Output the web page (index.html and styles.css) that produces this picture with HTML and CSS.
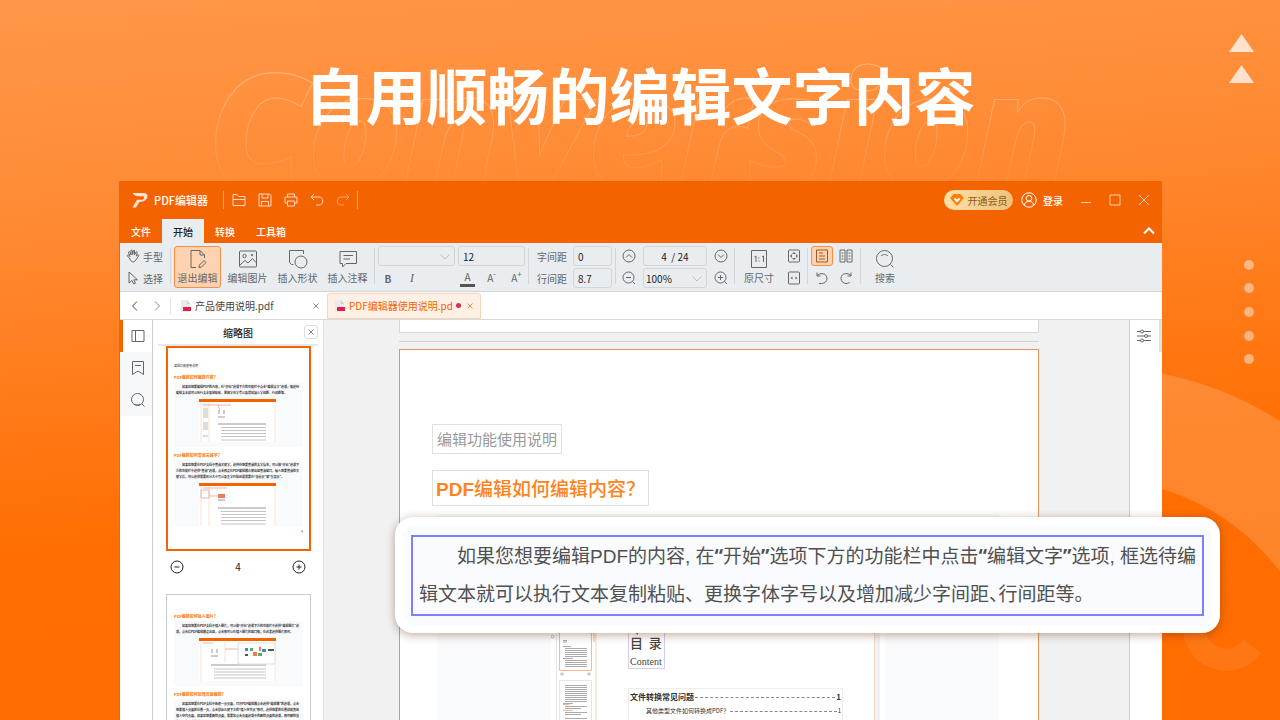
FILE: index.html
```html
<!DOCTYPE html>
<html lang="zh-CN">
<head>
  <meta charset="UTF-8">
  <title>PDF编辑器</title>
  <link rel="stylesheet" href="styles.css">
</head>
<body>
  <!-- background shapes -->
  <svg class="deco" viewBox="0 0 1280 720" preserveAspectRatio="xMaxYMax slice" aria-hidden="true">
    <circle class="deco-ring" cx="1095" cy="710" r="287"/>
    <path class="deco-hook" d="M1194 628 A32 32 0 0 0 1252 646.500"/>
    <path class="deco-tri" d="M1241.500 34 L1254 52 H1229 Z M1241.500 65 L1254 83 H1229 Z"/>
    <g class="deco-dots">
      <circle cx="1249" cy="265" r="5"/>
      <circle cx="1249" cy="288" r="5"/>
      <circle cx="1249" cy="312" r="5"/>
      <circle cx="1249" cy="336" r="5"/>
      <circle cx="1249" cy="359" r="5"/>
    </g>
  </svg>

  <header class="banner">
    <div class="banner-ghost">Conversion</div>
    <h1>自用顺畅的编辑文字内容</h1>
  </header>

  <main class="window">
    <!-- title bar -->
    <div class="titlebar">
      <svg class="logo" width="16" height="16" viewBox="0 0 16 16"><path d="M.5 1 H12 C15.500 1 16.500 4.500 14.500 7 C13 9 10.500 9.800 7.500 10 L4 15.500 H.5 L5 7.800 H10 C12 7.500 13 4.200 11 4.200 H5.500 C3.500 4.200 1.500 3 .5 1 Z"/></svg>
      <strong class="app-name">PDF编辑器</strong>
      <div class="quick">
        <button aria-label="打开"><svg width="16" height="16" viewBox="0 0 16 16"><path d="M2 13.500 V2.500 H6 L7.500 4.500 H14 V13.500 Z M2 7.500 H14"/></svg></button>
        <button aria-label="保存"><svg width="16" height="16" viewBox="0 0 16 16"><path d="M2 2 H12.500 L14 3.500 V14 H2 Z M5 2 V6 H11 V2 M4.500 14 V9.500 H11.500 V14"/></svg></button>
        <button aria-label="打印"><svg width="16" height="16" viewBox="0 0 16 16"><path d="M4.500 5 V2 H11.500 V5 M4.500 11 H2 V5 H14 V11 H11.500 M4.500 9 H11.500 V14 H4.500 Z"/></svg></button>
        <button aria-label="撤销"><svg width="16" height="16" viewBox="0 0 16 16"><path d="M5 2 L2 5 L5 8 M2 5 H10 C15 5 15 13 10 13 H7"/></svg></button>
        <button class="faded" aria-label="重做"><svg width="16" height="16" viewBox="0 0 16 16"><path d="M11 2 L14 5 L11 8 M14 5 H6 C1 5 1 13 6 13 H9"/></svg></button>
      </div>
      <div class="account">
        <button class="vip"><svg width="14" height="14" viewBox="0 0 14 14"><path class="gem" d="M3.500 1 H10.500 L14 5 L7 13 L0 5 Z"/><path class="gem-v" d="M4.500 5.500 L7 8 L9.500 5.500"/></svg>开通会员</button>
        <button class="login"><svg width="16" height="16" viewBox="0 0 16 16"><circle cx="8" cy="8" r="7.200"/><circle cx="8" cy="6.300" r="2.800"/><path d="M3.500 13 C4 10.500 5.500 9.200 8 9.200 C10.500 9.200 12 10.500 12.500 13"/></svg>登录</button>
        <button class="win" aria-label="最小化"><svg width="12" height="12" viewBox="0 0 12 12"><path d="M1 8.500 H11"/></svg></button>
        <button class="win" aria-label="最大化"><svg width="12" height="12" viewBox="0 0 12 12"><path d="M1 1 H11 V11 H1 Z"/></svg></button>
        <button class="win" aria-label="关闭"><svg width="12" height="12" viewBox="0 0 12 12"><path d="M1 1 L11 11 M11 1 L1 11"/></svg></button>
      </div>
    </div>

    <!-- menu -->
    <nav class="menu">
      <button>文件</button>
      <button class="current">开始</button>
      <button>转换</button>
      <button class="wide">工具箱</button>
      <button class="collapse" aria-label="收起"><svg width="12" height="8" viewBox="0 0 12 8"><path d="M1 6.500 L6 1.500 L11 6.500"/></svg></button>
    </nav>

    <!-- ribbon -->
    <div class="ribbon">
      <div class="group tools">
        <button><svg width="14" height="14" viewBox="0 0 14 14"><path d="M4 10 L1.500 7 C1 6 2.200 5.500 3 6.500 L4 7.500 L2.500 3.500 C2.300 2.500 3.500 2.200 4 3.200 L5.200 6 L4.800 1.800 C4.800 .700 6 .700 6.200 1.700 L6.800 5.500 L7.300 1.700 C7.500 .700 8.700 .900 8.600 2 L8.400 6 L10 3 C10.500 2.200 11.500 2.600 11.200 3.600 L10.300 7 L11.800 6 C12.800 5.500 13.300 6.500 12.500 7.200 L9.800 11 C8.500 14 5 13.500 4 10 Z"/></svg>手型</button>
        <button><svg width="14" height="14" viewBox="0 0 14 14"><path d="M3 1 V12 L5.800 9.500 L7.800 13 L9.500 12.200 L7.800 8.800 H11.500 Z"/></svg>选择</button>
      </div>
      <i class="sep"></i>
      <div class="bigs">
        <button class="big active"><svg width="20" height="20" viewBox="0 0 20 20"><path d="M8 18.500 H3 V1.500 H12 L16.500 6 V9 M12 1.500 V6 H16.500 M11 18.500 L11.500 16 L16 11.500 L18 13.500 L13.500 18 Z"/></svg>退出编辑</button>
        <button class="big"><svg width="20" height="20" viewBox="0 0 20 20"><rect x="1.500" y="2" width="17" height="16" rx="1"/><circle cx="6.500" cy="7" r="1.700"/><path d="M2 16 L7 11.500 L10 14 L14.500 9.500 L18.500 14"/><circle cx="14" cy="6" r=".8"/></svg>编辑图片</button>
        <button class="big"><svg width="20" height="20" viewBox="0 0 20 20"><path d="M5.500 15.500 H3.500 L1.500 13.500 V1.500 H15.500 V5"/><circle cx="13" cy="13" r="6"/></svg>插入形状</button>
        <button class="big"><svg width="20" height="20" viewBox="0 0 20 20"><path d="M2 2.500 H18.500 V14.500 H8 L4.500 18 V14.500 H2 Z M5.500 6.500 H15 M5.500 10 H12"/></svg>插入注释</button>
      </div>
      <i class="sep"></i>
      <div class="group font">
        <label class="pick"><select aria-label="字体"><option></option></select><svg width="10" height="6" viewBox="0 0 10 6"><path d="M.5 .500 L5 5 L9.500 .500"/></svg></label>
        <input type="text" value="12" aria-label="字号">
        <div class="styles">
          <button class="bold">B</button>
          <button class="italic">I</button>
        </div>
        <div class="sizes">
          <button class="color">A</button>
          <button>A<sup>-</sup></button>
          <button>A<sup>+</sup></button>
        </div>
      </div>
      <i class="sep"></i>
      <div class="group spacing">
        <label for="charGap">字间距</label><input id="charGap" type="text" value="0">
        <label for="lineGap">行间距</label><input id="lineGap" type="text" value="8.7">
      </div>
      <i class="sep"></i>
      <div class="group paging">
        <button aria-label="上一页"><svg width="14" height="14" viewBox="0 0 14 14"><circle cx="7" cy="7" r="6"/><path d="M4 8.500 L7 5.500 L10 8.500"/></svg></button>
        <input type="text" class="center" value="4  / 24" aria-label="页码">
        <button aria-label="下一页"><svg width="14" height="14" viewBox="0 0 14 14"><circle cx="7" cy="7" r="6"/><path d="M4 5.500 L7 8.500 L10 5.500"/></svg></button>
        <button aria-label="缩小"><svg width="14" height="14" viewBox="0 0 14 14"><circle cx="6.500" cy="6.500" r="5.500"/><path d="M4 6.500 H9 M10.500 10.500 L13 13"/></svg></button>
        <label class="pick"><select aria-label="缩放"><option>100%</option></select><svg width="10" height="6" viewBox="0 0 10 6"><path d="M.5 .500 L5 5 L9.500 .500"/></svg></label>
        <button aria-label="放大"><svg width="14" height="14" viewBox="0 0 14 14"><circle cx="6.500" cy="6.500" r="5.500"/><path d="M4 6.500 H9 M6.500 4 V9 M10.500 10.500 L13 13"/></svg></button>
      </div>
      <i class="sep"></i>
      <button class="big small"><svg width="20" height="20" viewBox="0 0 20 20"><path d="M2.500 1.500 H17.500 V18.500 H2.500 Z M5.500 8 L7 7 V13 M13 8 L14.500 7 V13"/><path d="M10 8.500 V9.500 M10 11.500 V12.500"/></svg>原尺寸</button>
      <div class="group fit">
        <button aria-label="适合页面"><svg width="14" height="14" viewBox="0 0 14 14"><rect x="1.500" y="1" width="11" height="12" rx="1"/><path class="solid" d="M7 3 L9 5 H5 Z M7 11 L9 9 H5 Z M3 7 L5 5 V9 Z M11 7 L9 5 V9 Z"/></svg></button>
        <button aria-label="适合宽度"><svg width="14" height="14" viewBox="0 0 14 14"><rect x="1.500" y="1" width="11" height="12" rx="1"/><path class="solid" d="M3.500 7 L5.500 5.500 V8.500 Z M10.500 7 L8.500 5.500 V8.500 Z"/></svg></button>
      </div>
      <i class="sep"></i>
      <div class="group view">
        <button class="active" aria-label="单页"><svg width="14" height="14" viewBox="0 0 14 14"><path d="M1.500 1 H12.500 V13 H1.500 Z M4 4 H8 M4 7 H10 M4 10 H10"/></svg></button>
        <button aria-label="双页"><svg width="14" height="14" viewBox="0 0 14 14"><path d="M1 1 H6 V13 H1 Z M8 1 H13 V13 H8 Z M2.500 4 H4.500 M2.500 7 H4.500 M2.500 10 H4.500 M9.500 4 H11.500 M9.500 7 H11.500 M9.500 10 H11.500"/></svg></button>
        <button aria-label="向左旋转"><svg width="14" height="14" viewBox="0 0 14 14"><path d="M2 1.500 V5 H5.500 M2 5 C4 1.500 12 1.500 12 7.500 C12 10.500 9.500 12.500 6.500 12.500 H4"/></svg></button>
        <button aria-label="向右旋转"><svg width="14" height="14" viewBox="0 0 14 14"><path d="M12 1.500 V5 H8.500 M12 5 C10 1.500 2 1.500 2 7.500 C2 10.500 4.500 12.500 7 12.500 C9 12.500 10 12 11 11"/></svg></button>
      </div>
      <i class="sep"></i>
      <button class="big small"><svg width="20" height="20" viewBox="0 0 20 20"><circle cx="9.500" cy="9.500" r="8"/><path d="M6 7 C8 5 11 5 13 7 M15.500 15.500 L18.500 18.500"/></svg>搜索</button>
    </div>

    <!-- open files -->
    <div class="filebar">
      <div class="history">
        <button aria-label="后退"><svg width="8" height="10" viewBox="0 0 8 10"><path d="M6 .500 L1.500 5 L6 9.500"/></svg></button>
        <button class="dim" aria-label="前进"><svg width="8" height="10" viewBox="0 0 8 10"><path d="M2 .500 L6.500 5 L2 9.500"/></svg></button>
      </div>
      <div class="file">
        <svg class="pdf" width="12" height="12" viewBox="0 0 12 12"><path class="sheet" d="M1 0 H8 L10 3 V12 H1 Z"/><path class="tag" d="M3 7 H11 V11 H3 Z"/><path class="fold" d="M7 1 L10 4 H7 Z"/></svg>
        <span>产品使用说明.pdf</span>
        <button class="close" aria-label="关闭"><svg width="6" height="6" viewBox="0 0 6 6"><path d="M.5 .500 L5.500 5.500 M5.500 .500 L.5 5.500"/></svg></button>
      </div>
      <div class="file open">
        <svg class="pdf" width="12" height="12" viewBox="0 0 12 12"><path class="sheet" d="M1 0 H8 L10 3 V12 H1 Z"/><path class="tag" d="M3 7 H11 V11 H3 Z"/><path class="fold" d="M7 1 L10 4 H7 Z"/></svg>
        <span>PDF编辑器使用说明.pd</span>
        <i class="unsaved"></i>
        <button class="close" aria-label="关闭"><svg width="6" height="6" viewBox="0 0 6 6"><path d="M.5 .500 L5.500 5.500 M5.500 .500 L.5 5.500"/></svg></button>
      </div>
    </div>

    <div class="work">
      <nav class="rail">
        <button class="current" aria-label="缩略图"><svg width="14" height="14" viewBox="0 0 14 14"><path d="M1 1.500 H13 V12.500 H1 Z M4.500 1.500 V12.500"/></svg></button>
        <button aria-label="书签"><svg width="14" height="14" viewBox="0 0 14 14"><path d="M1.500 .500 H12.500 V13.500 L7 10 L1.500 13.500 Z M4 4.500 H10"/></svg></button>
        <button aria-label="搜索"><svg width="14" height="14" viewBox="0 0 14 14"><circle cx="6.500" cy="6.500" r="6"/><path d="M4 11 C6 12.500 8 12 9 11 M11 11 L13.500 13.500"/></svg></button>
      </nav>

      <aside class="thumbs">
        <div class="thumbs-head"><span>缩略图</span><button aria-label="关闭"><svg width="6" height="6" viewBox="0 0 6 6"><path d="M.5 .500 L5.500 5.500 M5.500 .500 L.5 5.500"/></svg></button></div>
        <div class="thumb selected">
          <p class="mini-top">编辑功能使用说明</p>
          <h3>PDF编辑如何编辑内容？</h3>
          <div class="mini">
            <p>如果您想要编辑PDF的内容，在“开始”选项下方的功能栏中点击“编辑文字”选项，框选待编辑文本就可以执行文本复制粘贴、更换字体字号以及增加减少字间距、行间距等。</p>
            <svg width="77" height="43" viewBox="0 0 77 43"><path class="m-bg" d="M0 0 H77 V43 H0 Z"/><path class="m-bar" d="M0 0 H77 V3 H0 Z"/><path class="m-edge" d="M2 3 V43 M10 3 V43 M76 3 V43 M0 5 H14"/><path class="m-red" d="M4 6 H32 M19 6 L21 11"/><path class="m-thumb" d="M4 9 H9 V19 H4 Z M4 23 H9 V31 H4 Z M4 36 H9 V38 H4 Z"/><path class="m-ink" d="M19 12 H21 M24 12 H26 M19 14 H21 M24 14 H26 M19 18 H26 M19 25 H67"/><path class="m-line" d="M22 28.500 H67 M22 31.500 H67 M22 34.500 H67 M22 37.500 H67 M22 41 H67"/></svg>
          </div>
          <h3>PDF编辑如何查询关键字？</h3>
          <div class="mini">
            <p>如果您想要在PDF文档中查询关键字，选择你想要查询的文字信息，可以按“开始”选项下方的功能栏中选择“查询”选项，点击即会在PDF编辑器右侧出现查询窗口，输入想要查询的关键字后，可以选择需要区分大小写以及全字匹配还是需要在“当前页”或“全部页”。</p>
            <svg width="77" height="43" viewBox="0 0 77 43"><path class="m-bg" d="M0 0 H77 V43 H0 Z"/><path class="m-bar" d="M0 0 H77 V3 H0 Z"/><path class="m-edge" d="M2 3 V43 M10 3 V43 M76 3 V43"/><path class="m-red" d="M2 7 H10 V15 H2 Z M10 13 H19 M4 5 H28"/><path class="m-pic" d="M19 11 H26 V15 H19 Z"/><path class="m-ink" d="M19 17 H26 M19 25 H67"/><path class="m-line" d="M22 28.500 H67 M22 31.500 H67 M22 34.500 H67 M22 37.500 H67 M22 41 H67"/></svg>
          </div>
          <p class="mini-page">4</p>
        </div>
        <div class="thumb-zoom">
          <button aria-label="缩小"><svg width="14" height="14" viewBox="0 0 14 14"><circle cx="7" cy="7" r="6"/><path d="M4.500 7 H9.500"/></svg></button>
          <span>4</span>
          <button aria-label="放大"><svg width="14" height="14" viewBox="0 0 14 14"><circle cx="7" cy="7" r="6"/><path d="M4.500 7 H9.500 M7 4.500 V9.500"/></svg></button>
        </div>
        <div class="thumb">
          <h3>PDF编辑如何插入图片？</h3>
          <div class="mini">
            <p>如果您想要在PDF文档中插入图片，可以按“开始”选项下方的功能栏中选择“编辑图片”选项，点击后PDF编辑器会出现，点击即可以在插入图片的窗口框，在这里选择图片即可。</p>
            <svg width="77" height="43" viewBox="0 0 77 43"><path class="m-bg" d="M0 0 H77 V43 H0 Z"/><path class="m-bar" d="M0 0 H77 V3 H0 Z"/><path class="m-edge" d="M2 3 V43 M76 3 V43 M26 4 V25"/><path class="m-red" d="M4 5 H14 M26 11 H44"/><path class="m-ink" d="M12 12 H14 M17 12 H19 M12 14 H14 M17 14 H19 M12 18 H19 M12 27 H67"/><path class="m-line" d="M15 31 H67 M15 34 H67 M15 37 H67 M15 40 H67"/><path class="m-panel" d="M39 5 H76 V26 H39 Z"/><path class="m-blue" d="M46 10 H49 V13 H46 Z M63 11 H67 V14 H63 Z"/><path class="m-green" d="M51 10 H54 V13 H51 Z M59 15 H63 V18 H59 Z"/><path class="m-pic" d="M60 9 H62 V13 H60 Z M54 14 H58 V18 H54 Z"/><path class="m-dark" d="M46 16 H49 V18 H46 Z M69 11 H75 V13 H69 Z"/></svg>
          </div>
          <h3>PDF编辑如何处理页面编辑？</h3>
          <div class="mini">
            <p>如果您想要在PDF文档中新建一页页面，打开PDF编辑器点击选择“编辑器”的选项，点击想要插入页面的位置一页，点击鼠标右键下方的“插入空白页”即可，选择想要的位置就能直接插入空白页面，如果您想要删除页面，需要您点击页面选项中的删除页面的选项，即可删除当前页面的内容信息。</p>
          </div>
        </div>
      </aside>

      <section class="canvas">
        <div class="page previous"></div>
        <div class="page-rule"></div>
        <article class="page">
          <p class="doc-name">编辑功能使用说明</p>
          <h2><b>PDF</b>编辑如何编辑内容<span class="mark">？</span></h2>
          <div class="para">
            <div class="shot">
              <svg class="shot-thumbs" width="66" height="92" viewBox="0 0 66 92">
                <path class="s-edge" d="M5.500 0 V92"/>
                <circle class="s-dot" cx="1.500" cy="7.500" r="1.500"/>
                <path class="s-orange" d="M8.500 0 V41.500 H40.500 V0"/>
                <path class="s-tan" d="M42 0 H44 V13 H42 Z M44.500 0 H45.500 V92 H44.500 Z"/>
                <path class="s-ink" d="M12 11.500 H16 M12 13 H16 M12 17.500 H20 M14 19.500 H36 M14 21.500 H36 M14 23.500 H36 M14 25.500 H36 M14 27.500 H36 M12 29.500 H22 M14 31.500 H36 M14 33.500 H36 M14 35.500 H36 M14 37.500 H36"/>
                <path class="s-ink" d="M14 56.500 H36 M14 58.500 H36 M14 60.500 H36 M14 62.500 H36 M14 64.500 H36 M14 66.500 H36 M14 68.500 H36 M14 70.500 H36 M14 72.500 H36 M12 74.500 H22"/>
                <path class="s-ink" d="M14 77.500 H36 M14 79.500 H30 M14 83.500 H36 M14 85.500 H30 M14 89.500 H36"/>
                <path class="s-edge" d="M8.500 92 V51.500 H40.500 V92"/>
                <circle class="s-dot" cx="11" cy="45" r="1.200"/><circle class="s-dot" cx="38" cy="45" r="1.200"/>
                <path class="s-orange" d="M12 75.500 H18 M12 81.500 H22"/>
              </svg>
              <div class="shot-doc">
                <div class="contents"><svg class="arrow" width="6" height="6" viewBox="0 0 6 6"><path d="M1 0 H4 V2 L5 1 V6 L1 3 Z"/></svg><strong>目  录</strong><span>Content</span></div>
                <ul class="toc">
                  <li class="chapter"><span>文件转换常见问题</span><i></i><span>1</span></li>
                  <li><span>其他类型文件如何转换成PDF？</span><i></i><span>1</span></li>
                  <li><span>CAD转PDF版本不高么？</span><i></i><span>1</span></li>
                </ul>
              </div>
            </div>
          </div>
        </article>
      </section>

      <aside class="props">
        <button aria-label="属性"><svg width="16" height="14" viewBox="0 0 16 14"><path d="M1 2.500 H4.500 M7.500 2.500 H15 M1 7 H8.500 M11.500 7 H15 M1 11.500 H4.500 M7.500 11.500 H15"/><circle cx="6" cy="2.500" r="1.500"/><circle cx="10" cy="7" r="1.500"/><circle cx="6" cy="11.500" r="1.500"/></svg></button>
      </aside>
    </div>
  </main>

  <!-- magnified paragraph -->
  <div class="lens">
    <div class="lens-inner">
      <p>如果您想要编辑PDF的内容, 在<q>开始</q>选项下方的功能栏中点击<q>编辑文字</q>选项, 框选待编<br>辑文本就可以执行文本复制粘贴、更换字体字号以及增加减少字间距<span class="half">、</span>行间距等。</p>
    </div>
  </div>
</body>
</html>
```
FILE: styles.css
```css
* {
  box-sizing: border-box;
}

body {
  margin: 0;
  height: 100vh;
  display: flex;
  flex-direction: column;
  position: relative;
  overflow: hidden;
  background: linear-gradient(175deg, #ff9849 0%, #ff8a34 27%, #ff6e02 67%, #ff6c00 100%);
  font-family: "Noto Sans CJK SC", sans-serif;
  font-size: 10px;
  color: #333;
}

button {
  border: none;
  background: none;
  padding: 0;
  margin: 0;
  font: inherit;
  color: inherit;
  display: flex;
  align-items: center;
  justify-content: center;
}

input,
select {
  font: inherit;
  color: #222;
  border: 1px solid #d3d6d9;
  border-radius: 3px;
  background: #eaedf0;
  padding: 0 4px;
  margin: 0;
  width: 100%;
  height: 20px;
  min-width: 0;
  appearance: none;
}

svg {
  flex: none;
  fill: none;
  stroke: currentColor;
}

h1, h2, h3, p, ul {
  margin: 0;
  padding: 0;
}

/* background shapes */
.deco {
  position: absolute;
  inset: 0;
  width: 100%;
  height: 100%;
  stroke: none;
}

.deco-ring {
  stroke: #fff;
  stroke-width: 112;
  opacity: 0.17;
}

.deco-hook {
  stroke: #fff;
  stroke-width: 22;
  opacity: 0.08;
}

.deco-tri {
  fill: rgba(255, 255, 255, 0.75);
}

.deco-dots {
  fill: rgba(255, 255, 255, 0.45);
}

/* banner */
.banner {
  position: relative;
  height: 181px;
  flex: none;
  padding-top: 52px;
  overflow: hidden;
  text-align: center;
}

.banner h1 {
  position: relative;
  font-size: 61px;
  line-height: 84px;
  font-weight: 700;
  color: #fff;
}

.banner-ghost {
  position: absolute;
  top: 20px;
  left: 0;
  right: 0;
  font-family: "Open Sans", sans-serif;
  font-size: 158px;
  line-height: 212px;
  font-weight: 800;
  font-style: italic;
  color: transparent;
  -webkit-text-stroke: 1px rgba(255, 255, 255, 0.4);
  -webkit-mask-image: linear-gradient(#000 15%, transparent 85%);
  mask-image: linear-gradient(#000 15%, transparent 85%);
}

/* window */
.window {
  position: relative;
  flex: 1;
  min-height: 0;
  margin: 0 118px 0 119px;
  display: flex;
  flex-direction: column;
  border-left: 1px solid #f46400;
  background: #fff;
}

.titlebar {
  flex: none;
  height: 38px;
  display: flex;
  align-items: center;
  padding: 0 12px;
  background: #f36400;
  color: #fff;
}

.logo {
  fill: #fde3d0;
  stroke: none;
}

.app-name {
  margin-left: 6px;
  width: 69px;
  font-size: 11px;
  font-weight: 500;
  white-space: nowrap;
}

.quick {
  display: flex;
  gap: 10px;
  align-items: center;
  height: 18px;
  padding: 0 6px 0 7px;
  border-left: 1px solid #f9a56c;
  border-right: 1px solid #f9a56c;
  color: #ffd9bf;
}

.faded {
  color: #f9a56c;
}

.account {
  margin-left: auto;
  display: flex;
  align-items: center;
}

.vip {
  width: 69px;
  height: 20px;
  gap: 4px;
  border-radius: 10px;
  background: linear-gradient(90deg, #fde0a8, #efc079);
  color: #8b5a16;
}

.gem {
  fill: #fb8205;
  stroke: none;
}

.gem-v {
  stroke: #fff;
  stroke-width: 2;
}

.login {
  margin: 0 8px;
  gap: 6px;
  font-weight: 500;
}

.win {
  width: 29px;
  color: #ffd0b0;
}

.win:last-child {
  width: 12px;
  margin-left: 9px;
}

.menu {
  flex: none;
  height: 24px;
  display: flex;
  background: #f36400;
}

.menu button {
  width: 42px;
  color: #fff;
  font-weight: 500;
}

.menu .current {
  background: #e9edf0;
  color: #222;
}

.menu .wide {
  width: 50px;
}

.menu .collapse {
  width: 12px;
  margin: 0 7px 0 auto;
  stroke-width: 2;
}

/* ribbon */
.ribbon {
  flex: none;
  height: 49px;
  display: flex;
  align-items: flex-start;
  padding-top: 3px;
  background: #e9edf0;
  border-bottom: 1px solid #d0d5da;
  color: #666;
}

.sep {
  flex: none;
  width: 1px;
  height: 36px;
  margin: 2px 3px 0;
  background: #d3d7dd;
}

.group {
  display: grid;
  grid-auto-rows: 20px;
  gap: 2px 0;
  align-items: center;
}

.tools {
  padding: 0 4px 0 6px;
}

.tools button {
  gap: 3px;
}

.bigs {
  display: flex;
  gap: 3px;
}

.big {
  width: 47px;
  height: 42px;
  flex-direction: column;
  gap: 2px;
  line-height: 14px;
  white-space: nowrap;
}

.big.small {
  width: 42px;
}

.ribbon .active {
  background: #ffd2b1;
  border: 1px solid #f88d45;
  border-radius: 3px;
}

.font {
  grid-template-columns: 77px 67px;
  column-gap: 3px;
}

.pick {
  position: relative;
  display: block;
}

.pick svg {
  position: absolute;
  right: 5px;
  top: 8px;
  color: #bcc1c6;
}

.styles {
  display: flex;
}

.styles button {
  width: 20px;
  margin-right: 4px;
}

.styles .bold {
  font-weight: 700;
}

.italic {
  font-family: "Liberation Serif", serif;
  font-style: italic;
  font-size: 12px;
}

.sizes {
  display: flex;
  gap: 8px;
}

.sizes button {
  width: 18px;
  line-height: 14px;
}

.sizes sup {
  font-size: 8px;
  line-height: 8px;
  align-self: flex-start;
}

.sizes .color {
  width: 16px;
  margin-left: 2px;
  border-bottom: 3px solid #555;
}

.spacing {
  grid-template-columns: 36px 39px;
  padding-left: 5px;
}

.paging {
  grid-template-columns: 14px 64px 14px;
  column-gap: 7px;
  padding: 0 3px;
}

.paging select {
  padding: 0 2px;
}

.center {
  text-align: center;
  white-space: pre;
}

.fit {
  grid-template-columns: 14px;
  padding: 0 3px 0 7px;
}

.solid {
  fill: currentColor;
  stroke: none;
}

.view {
  grid-template-columns: 22px 22px;
  column-gap: 2px;
}

.view button {
  height: 20px;
}

.view .active {
  color: #a0592a;
}

/* file tabs */
.filebar {
  flex: none;
  height: 28px;
  display: flex;
  align-items: center;
  border-bottom: 1px solid #d9d9d9;
  color: #444;
}

.history {
  display: flex;
  gap: 14px;
  width: 51px;
  height: 16px;
  padding-left: 11px;
  border-right: 1px solid #e4e4e4;
}

.history .dim {
  color: #888;
}

.file {
  display: flex;
  align-items: center;
  width: 156px;
  height: 26px;
  padding: 0 8px 0 9px;
}

.file span {
  margin-left: 3px;
  white-space: nowrap;
}

.file .close {
  margin-left: auto;
  color: #888;
}

.file.open {
  width: 154px;
  padding: 0 7px 0 6px;
  background: #fff0e5;
  border: 1px solid #f8d3b8;
  border-radius: 3px 3px 0 0;
  color: #f36400;
}

.file.open .close {
  color: #f08a4a;
}

.sheet {
  fill: #e9e9ee;
  stroke: none;
}

.fold {
  fill: #ccc;
  stroke: none;
}

.tag {
  fill: #e0204a;
  stroke: none;
}

.unsaved {
  width: 5px;
  height: 5px;
  margin-left: 3px;
  border-radius: 50%;
  background: #d9304a;
}

/* work area */
.work {
  flex: 1;
  min-height: 0;
  display: flex;
  overflow: hidden;
}

.rail {
  flex: none;
  width: 33px;
  border-right: 1px solid #ccc;
}

.rail button {
  width: 32px;
  height: 32px;
  padding-left: 3px;
  background: #f6f8fa;
  color: #666;
}

.rail .current {
  background: #fff;
  padding: 0;
  border-left: 3px solid #f36400;
}

.thumbs {
  flex: none;
  width: 171px;
  padding: 0 5px;
  border-right: 1px solid #e2e2e2;
}

.thumbs-head {
  display: flex;
  align-items: center;
  justify-content: flex-end;
  height: 26px;
  border-bottom: 2px solid #e6e8ea;
  color: #222;
  font-weight: 500;
}

.thumbs-head span {
  margin-right: 51px;
}

.thumbs-head button {
  width: 14px;
  height: 14px;
  border: 1px solid #d8dee6;
  border-radius: 3px;
  color: #888;
}

.thumb {
  width: 145px;
  height: 205px;
  margin-left: 8px;
  padding: 13px 7px 0;
  border: 1px solid #ccc;
  overflow: hidden;
}

.thumb.selected {
  border: 2px solid #f36400;
  padding: 15px 6px 0;
}

.mini-top {
  font-size: 3px;
  line-height: 6px;
}

.thumb h3 {
  margin-top: 3px;
  font-size: 4px;
  line-height: 10px;
  font-weight: 700;
  color: #ff7a10;
}

.mini {
  min-height: 65px;
  margin-bottom: 1px;
  padding: 2px 4px 0 2px;
  background: #f9fafc;
}

.mini p {
  font-family: "Liberation Sans", "Noto Sans CJK SC", sans-serif;
  font-size: 3px;
  line-height: 6px;
  font-weight: 700;
  text-align: justify;
  text-indent: 6px;
}

.mini svg {
  display: block;
  margin: 3px auto 0;
}

.mini-page {
  margin-top: 4px;
  font-size: 3px;
  text-align: right;
}

.m-bg { fill: #fff; stroke: none; }
.m-bar { fill: #f36400; stroke: none; }
.m-edge { stroke: #fae3d3; }
.m-red { stroke: #eeb0a8; }
.m-thumb { fill: #ddd; stroke: none; }
.m-ink { stroke: #999; }
.m-line { stroke: #aaa; stroke-width: 0.7; }
.m-pic { fill: #ee7a5a; stroke: none; }
.m-panel { fill: #fff; stroke: #ddd; }
.m-blue { fill: #4a84c0; stroke: none; }
.m-green { fill: #55b060; stroke: none; }
.m-dark { fill: #555; stroke: none; }

.thumb-zoom {
  display: flex;
  align-items: center;
  justify-content: space-between;
  height: 43px;
  padding: 0 12px 12px;
  color: #222;
}

/* document */
.canvas {
  flex: 1;
  min-width: 0;
  padding: 0 90px 0 75px;
  background: #f1f1f1;
}

.page {
  height: 400px;
  padding: 74px 39px 0 32px;
  border: 1px solid #e8935a;
  background: #fff;
}

.page.previous {
  height: 13px;
  padding: 0;
  border: 1px solid #d8d8d8;
  border-top: none;
}

.page-rule {
  height: 16px;
  background: linear-gradient(#f1f1f1 8px, #d4d4d4 8px, #d4d4d4 9px, #f1f1f1 9px);
}

.doc-name {
  width: max-content;
  height: 30px;
  padding: 0 4px;
  border: 1px solid #e0e0e0;
  font-size: 15px;
  line-height: 28px;
  color: #999;
}

.page h2 {
  width: max-content;
  height: 36px;
  margin-top: 16px;
  padding: 0 3px;
  border: 1px solid #e0e0e0;
  font-size: 19px;
  line-height: 34px;
  font-weight: 500;
  color: #ff8320;
}

.page h2 b {
  font-family: "Liberation Sans", sans-serif;
}

.mark {
  font-family: "Noto Sans CJK TC", sans-serif;
}

.para {
  margin: 8px 0 0 5px;
  padding: 115px 119px 0 114px;
  background: #f9fafc;
}

.shot {
  display: flex;
  background: #fff;
  border-right: 5px solid #f1f1f1;
  outline: 0 solid #fff;
  box-shadow: 5px 0 0 #fff;
}

.s-edge { stroke: #e6e6e6; }
.s-orange { stroke: #f4bb90; }
.s-tan { fill: #f5d8c4; stroke: none; }
.s-ink { stroke: #aaa; }
.s-dot { stroke: #999; stroke-width: 0.7; }

.shot-doc {
  flex: 1;
  min-width: 0;
  padding: 0 31px 0 11px;
  border-right: 1px solid #f5d8c4;
}

.contents {
  position: relative;
  display: flex;
  flex-direction: column;
  width: 37px;
  height: 40px;
  padding-left: 1px;
  border: 1px solid #d5ccf2;
  border-top: none;
  color: #444;
}

.arrow {
  position: absolute;
  left: 4px;
  top: 0;
  fill: #e0303a;
  stroke: none;
}

.contents strong {
  font-size: 13px;
  line-height: 28px;
  font-weight: 500;
  white-space: pre;
}

.contents span {
  font-family: "Liberation Serif", serif;
  font-size: 10px;
  line-height: 10px;
}

.toc {
  margin-top: 19px;
  padding: 0 1px;
  border: 1px solid #eee;
  list-style: none;
  font-size: 6px;
  line-height: 12px;
}

.toc li {
  display: flex;
  align-items: center;
  padding-left: 16px;
}

.toc .chapter {
  padding-left: 0;
  font-size: 8px;
  line-height: 16px;
  font-weight: 700;
}

.toc i {
  flex: 1;
  margin: 0 1px;
  border-bottom: 1px dashed #888;
}

.props {
  flex: none;
  width: 33px;
  border-left: 1px solid #ccc;
}

.props button {
  width: 32px;
  height: 32px;
  padding-right: 2px;
  border-right: 3px solid #dde2e8;
  color: #666;
}

/* lens over the page */
.lens {
  position: absolute;
  left: 395px;
  right: 60px;
  top: 517px;
  padding: 8px 8px 7px;
  border-radius: 18px;
  background: #fff;
  box-shadow: 0 2px 10px rgba(90, 40, 10, 0.4);
}

.lens-inner {
  padding: 10px 8px;
  border-radius: 12px;
  background: #fafbfe;
}

.lens p {
  padding: 0 6px;
  border: 2px solid #7f7fff;
  font-family: "Liberation Sans", "Noto Sans CJK SC", sans-serif;
  font-size: 19px;
  line-height: 38px;
  text-indent: 38px;
  white-space: nowrap;
  color: #505050;
}

.lens q {
  quotes: "“" "”";
}

.lens q::before,
.lens q::after {
  font-family: "Noto Sans", sans-serif;
  font-weight: 700;
}

.half {
  font-feature-settings: "halt";
}
```
